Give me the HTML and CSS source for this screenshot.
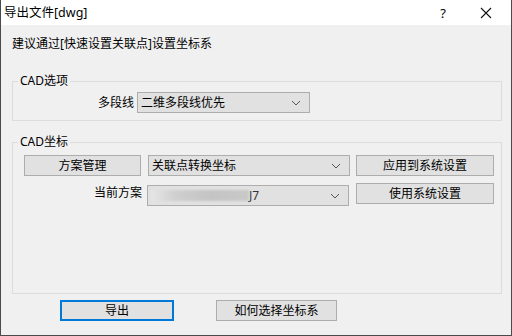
FILE: index.html
```html
<!DOCTYPE html>
<html lang="zh-CN">
<head>
  <meta charset="UTF-8">
  <title>导出文件[dwg]</title>
  <link rel="stylesheet" href="styles.css">
</head>
<body>
  <div class="window">
    <div class="titlebar">
      <span class="title">导出文件[dwg]</span>
      <span class="help">?</span>
      <span class="close">
        <svg width="12" height="12" viewBox="0 0 12 12"><path d="M1 1 L11 11 M11 1 L1 11" stroke="#111" stroke-width="1.1" fill="none"/></svg>
      </span>
    </div>

    <div class="content">
      <p class="hint">建议通过[快速设置关联点]设置坐标系</p>

      <fieldset class="group group-options">
        <legend>CAD选项</legend>
        <div class="row">
          <label class="label label-poly">多段线</label>
          <div class="combo combo-poly">
            <span>二维多段线优先</span>
            <svg class="chev" width="10" height="6" viewBox="0 0 10 6"><path d="M1 1 L5 5 L9 1" stroke="#555" fill="none"/></svg>
          </div>
        </div>
      </fieldset>

      <fieldset class="group group-coords">
        <legend>CAD坐标</legend>
        <div class="row row-first">
          <button class="btn btn-scheme">方案管理</button>
          <div class="combo combo-mode">
            <span>关联点转换坐标</span>
            <svg class="chev" width="10" height="6" viewBox="0 0 10 6"><path d="M1 1 L5 5 L9 1" stroke="#555" fill="none"/></svg>
          </div>
          <button class="btn btn-side">应用到系统设置</button>
        </div>
        <div class="row row-second">
          <label class="label label-current">当前方案</label>
          <div class="combo combo-current">
            <span class="blurred"></span><span class="tail">J7</span>
            <svg class="chev" width="10" height="6" viewBox="0 0 10 6"><path d="M1 1 L5 5 L9 1" stroke="#555" fill="none"/></svg>
          </div>
          <button class="btn btn-side btn-use">使用系统设置</button>
        </div>
      </fieldset>

      <div class="footer">
        <button class="btn btn-default">导出</button>
        <button class="btn btn-howto">如何选择坐标系</button>
      </div>
    </div>
  </div>
</body>
</html>
```

FILE: styles.css
```css
* {
  box-sizing: border-box;
}

body {
  margin: 0;
  font-family: "Noto Sans", "Noto Sans CJK SC", sans-serif;
  font-size: 12px;
  line-height: 16px;
  color: #000;
  background: #3a3a3a;
}

.window {
  width: 512px;
  height: 336px;
  background: #f0f0f0;
  border-left: 1px solid #4a4a4a;
  border-right: 1px solid #4a4a4a;
  border-bottom: 1px solid #4a4a4a;
  overflow: hidden;
}

.titlebar {
  height: 25px;
  background: #fff;
  display: flex;
  align-items: center;
  padding-left: 3px;
}

.title {
  flex: 1;
  font-size: 12.5px;
}

.help {
  width: 20px;
  text-align: center;
  font-size: 13px;
  margin-right: 27px;
}

.close {
  width: 12px;
  height: 12px;
  margin-right: 19px;
  display: flex;
}

.content {
  padding: 0 9px 0 11px;
}

.hint {
  margin: 11px 0 0 0;
}

.group {
  margin: 0;
  border: 1px solid #dcdcdc;
  padding: 0;
}

.group legend {
  padding: 0 2px;
  margin-left: 5px;
  line-height: 16px;
}

.group-options {
  margin-top: 21px;
  height: 48px;
}

.group-options .row {
  padding-top: 3px;
}

.group-coords {
  margin-top: 13px;
  height: 160px;
}

.row {
  display: flex;
  align-items: center;
}

.label {
  text-align: right;
}

.label-poly {
  width: 121px;
  margin-right: 3px;
}

.label-current {
  width: 129px;
  margin-right: 5px;
}

.combo {
  height: 21px;
  background: #e1e1e1;
  border: 1px solid #adadad;
  display: flex;
  align-items: center;
  padding: 0 0 0 3px;
}

.combo span {
  flex: none;
}

.combo .chev {
  margin-left: auto;
  margin-right: 8px;
}

.combo-poly {
  width: 173px;
}

.combo-mode {
  width: 202px;
  margin-left: 7px;
}

.combo-current {
  width: 202px;
  height: 21px;
}

.blurred {
  width: 98px;
  height: 11px;
  background: linear-gradient(90deg, #e6e6e6 0%, #cfcfcf 25%, #c4c4c4 60%, #c9c9c9 100%);
  filter: blur(1px);
}

.tail {
  color: #333;
}

.btn {
  font-family: inherit;
  font-size: 12px;
  line-height: 16px;
  height: 21px;
  padding: 0;
  background: #e1e1e1;
  border: 1px solid #adadad;
  color: #000;
}

.btn-scheme {
  width: 117px;
  margin-left: 11px;
}

.btn-side {
  width: 138px;
  margin-left: 6px;
}

.row-first {
  margin-top: 5px;
}

.row-second {
  margin-top: 9px;
  align-items: flex-start;
}

.btn-use {
  margin-top: -2px;
  margin-left: 7px;
}

.footer {
  display: flex;
  margin-top: 6px;
}

.btn-default {
  width: 114px;
  margin-left: 48px;
  border: 2px solid #0078d7;
}

.btn-howto {
  width: 121px;
  margin-left: 42px;
}
```
